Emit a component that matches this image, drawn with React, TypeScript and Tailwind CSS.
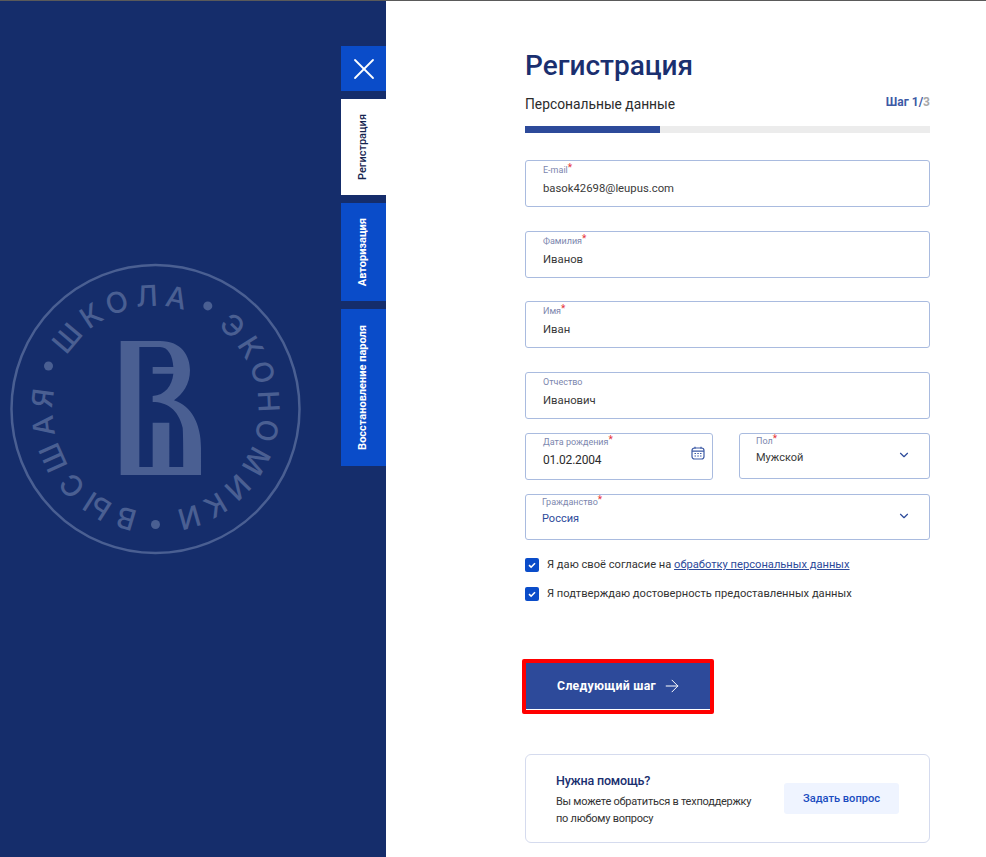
import { ArrowRight, ChevronDown, X } from "lucide-react";

const FONT = "font-['Roboto','Inter',sans-serif]";

function Label({ text, required }: { text: string; required?: boolean }) {
  return (
    <div className="relative h-[12px] text-[9px] leading-[12px] text-[#7d87ae]">
      <span className="relative">
        {text}
        {required && (
          <span className="absolute -top-[3px] left-full text-[10px] text-[#e5343a]">
            *
          </span>
        )}
      </span>
    </div>
  );
}

function Field({
  label,
  value,
  required,
}: {
  label: string;
  value: string;
  required?: boolean;
}) {
  return (
    <div className="h-[47px] rounded-[3px] border border-[#a9bbdf] pl-[17px] pt-[3px]">
      <Label text={label} required={required} />
      <div className="mt-[3px] text-[11.3px] leading-[20px] text-[#3a3a3a]">
        {value}
      </div>
    </div>
  );
}

function SelectField({
  label,
  value,
  valueClass,
}: {
  label: string;
  value: string;
  valueClass: string;
}) {
  return (
    <div className="flex h-[46px] justify-between rounded-[3px] border border-[#a9bbdf] pl-[16px] pr-[18px] pt-[1px]">
      <div>
        <Label text={label} required />
        <div className={`mt-[1px] text-[11px] leading-[20px] ${valueClass}`}>
          {value}
        </div>
      </div>
      <ChevronDown className="mt-[13px] h-[14px] w-[14px] text-[#2d4a9a]" strokeWidth={2} />
    </div>
  );
}

function Check() {
  return (
    <span className="flex h-[14px] w-[14px] shrink-0 items-center justify-center rounded-[2px] bg-[#0a4cc9]">
      <svg viewBox="0 0 14 14" className="h-[14px] w-[14px]" fill="none" stroke="white" strokeWidth={1.6}>
        <path d="M4 7.2 6.1 9.2 10 5.2" />
      </svg>
    </span>
  );
}

function Tab({
  label,
  active,
  className,
}: {
  label: string;
  active?: boolean;
  className: string;
}) {
  return (
    <div
      className={`flex w-[45px] items-center justify-center ${className} ${
        active ? "bg-white font-medium text-[#15244f]" : "bg-[#0a4cc9] font-bold text-white"
      }`}
    >
      <span className="rotate-180 text-[11px] [writing-mode:vertical-rl]">{label}</span>
    </div>
  );
}

function Emblem() {
  const tint = "#4a5f92";
  return (
    <svg
      viewBox="0 0 310 310"
      className="absolute left-0 top-[253px] h-[310px] w-[310px]"
      fill="none"
    >
      <circle cx="155.5" cy="155" r="144" stroke={tint} strokeWidth="2.5" />
      <path
        id="emblem-arc"
        d="M155.5 258A103 103 0 1 1 155.5 52A103 103 0 1 1 155.5 258"
      />
      <text
        fill={tint}
        fontSize="29"
        fontWeight="500"
        letterSpacing="6"
        fontFamily="Inter, sans-serif"
        textAnchor="middle"
      >
        <textPath href="#emblem-arc" startOffset="15.8%">ВЫСШАЯ</textPath>
        <textPath href="#emblem-arc" startOffset="44.5%">ШКОЛА</textPath>
        <textPath href="#emblem-arc" startOffset="78.9%" letterSpacing="5">ЭКОНОМИКИ</textPath>
      </text>
      <circle cx="207.8" cy="51.9" r="4.5" fill={tint} />
      <circle cx="48.5" cy="112" r="4.5" fill={tint} />
      <circle cx="155.5" cy="270.5" r="4.5" fill={tint} />
      <g transform="translate(110 77) scale(0.3333)">
        <path
          fill={tint}
          fillRule="evenodd"
          d="M32 30H150C215 30 240 75 240 118C240 160 218 190 192 208C245 225 273 280 273 350V432H32ZM88 48H150C175 48 188 75 190 108H128V128H190C186 165 165 192 128 195V213C170 213 205 235 218 290C220 310 220 408 220 408H178V275H128V408H88Z"
        />
      </g>
    </svg>
  );
}

export default function App() {
  return (
    <div className={`flex h-[857px] w-[986px] flex-col overflow-hidden bg-white ${FONT}`}>
      <div className="h-px bg-[#5a5a5a]" />
      <div className="flex flex-1">
        {/* Left panel */}
        <aside className="relative flex w-[386px] shrink-0 flex-col items-end bg-[#152d6b] pt-[45px]">
          <Emblem />
          <div className="relative flex flex-col gap-[8px]">
            <div className="flex h-[45px] w-[45px] items-center justify-center bg-[#0a4cc9]">
              <X className="h-[36px] w-[36px] text-white" strokeWidth={1.2} />
            </div>
            <Tab label="Регистрация" active className="h-[96px]" />
            <Tab label="Авторизация" className="h-[98px]" />
            <Tab label="Восстановление пароля" className="h-[157px]" />
          </div>
        </aside>

        {/* Form */}
        <main className="ml-[139px] w-[405px] pt-[47px]">
          <h1 className="text-[28px] font-medium leading-[36px] text-[#1a2f6f]">
            Регистрация
          </h1>
          <div className="mt-[10px] flex items-start justify-between">
            <span className="text-[13.8px] leading-[20px] text-[#2b2b2b]">
              Персональные данные
            </span>
            <span className="text-[12px] font-bold leading-[16px] text-[#3d5aa5]">
              Шаг 1/<span className="text-[#a8a8a8]">3</span>
            </span>
          </div>
          <div className="mt-[12px] h-[7px] bg-[#ececec]">
            <div className="h-full w-1/3 bg-[#2d4a9a]" />
          </div>

          <div className="mt-[27px] flex flex-col">
            <Field label="E-mail" value="basok42698@leupus.com" required />
            <div className="mt-[24px]">
              <Field label="Фамилия" value="Иванов" required />
            </div>
            <div className="mt-[23px]">
              <Field label="Имя" value="Иван" required />
            </div>
            <div className="mt-[24px]">
              <Field label="Отчество" value="Иванович" />
            </div>

            <div className="mt-[14px] flex gap-[26px]">
              <div className="relative h-[47px] w-[188px] rounded-[3px] border border-[#a9bbdf] pl-[17px] pt-[2px]">
                <Label text="Дата рождения" required />
                <div className="mt-[2px] text-[12px] leading-[20px] tracking-[-0.2px] text-[#2b2b2b]">
                  01.02.2004
                </div>
                <svg
                  viewBox="0 0 14 14"
                  className="absolute right-[7px] top-[12px] h-[14px] w-[14px]"
                  fill="none"
                  stroke="#3d5aa5"
                  strokeWidth="1.2"
                >
                  <rect x="1" y="2" width="12" height="11" rx="2.5" />
                  <path d="M1 5.2H13M4 .8V2.8M10 .8V2.8" />
                  <path d="M3.5 7.5H5M6.3 7.5H7.8M9 7.5H10.5M3.5 10H5M6.3 10H7.8M9 10H10.5" />
                </svg>
              </div>
              <div className="flex-1">
                <SelectField label="Пол" value="Мужской" valueClass="text-[#3a3a3a]" />
              </div>
            </div>

            <div className="mt-[14px]">
              <SelectField label="Гражданство" value="Россия" valueClass="text-[#2d4a9a]" />
            </div>

            <div className="mt-[17px] flex items-center gap-[8px] text-[11.15px] leading-[14px] text-[#333]">
              <Check />
              <span className="pt-[1px]">
                Я даю своё согласие на{" "}
                <span className="text-[#2d4a9a] underline">обработку персональных данных</span>
              </span>
            </div>
            <div className="mt-[14px] flex items-center gap-[8px] text-[11.15px] leading-[14px] text-[#333]">
              <Check />
              <span className="pt-[1px]">Я подтверждаю достоверность предоставленных данных</span>
            </div>

            <div className="-ml-[3px] mt-[58px] h-[55px] w-[192px] rounded-[2px] border-[4px] border-[#ff0000]">
              <div className="flex h-[46px] items-center justify-center gap-[6px] bg-[#2d4a9a] pl-[3px] text-[12.3px] font-bold tracking-[0.02em] text-white">
                Следующий шаг
                <ArrowRight className="h-[20px] w-[20px]" strokeWidth={1.2} />
              </div>
              <div className="h-px bg-white" />
            </div>

            <div className="mt-[40px] flex h-[89px] items-center justify-between rounded-[6px] border border-[#d5dbee] pl-[30px] pr-[30px]">
              <div className="pt-[2px]">
                <div className="text-[12.5px] font-medium leading-[18px] tracking-[-0.2px] text-[#1a2f6f]">
                  Нужна помощь?
                </div>
                <div className="mt-[3px] text-[11px] leading-[17px] tracking-[-0.25px] text-[#333]">
                  Вы можете обратиться в техподдержку
                  <br />
                  по любому вопросу
                </div>
              </div>
              <div className="flex h-[31px] w-[115px] items-center justify-center rounded-[3px] bg-[#eff4ff] pt-[1px] text-[11.1px] font-medium text-[#1a4cc0]">
                Задать вопрос
              </div>
            </div>
          </div>
        </main>
      </div>
    </div>
  );
}
